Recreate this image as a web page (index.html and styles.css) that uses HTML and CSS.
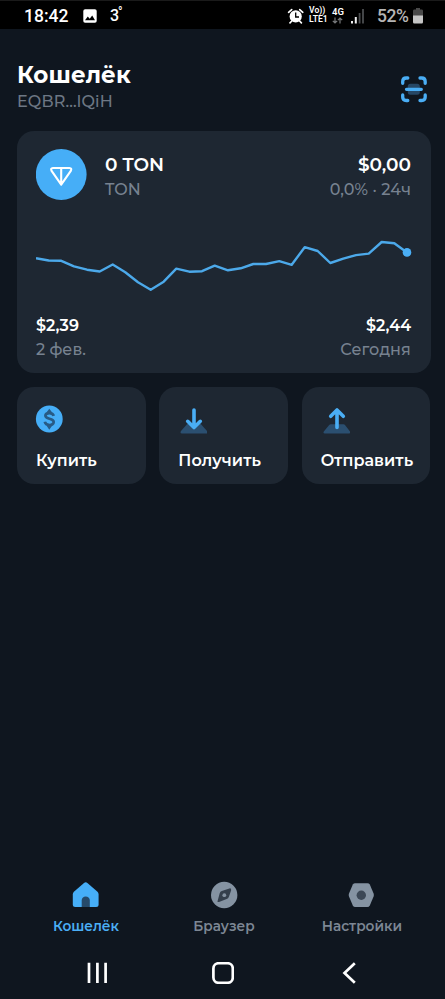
FILE: index.html
```html
<!DOCTYPE html>
<html lang="ru">
<head>
<meta charset="utf-8">
<title>Кошелёк</title>
<link rel="stylesheet" href="styles.css">
</head>
<body>
<div class="status">
  <span class="clock">18:42</span>
  <svg class="photo" width="14" height="14" viewBox="0 0 14 14"><rect x=".3" y=".3" width="13.4" height="13.4" rx="1.8" fill="#fff"/><path d="M2 11.2 4.8 7.6 6.7 9.8 9.2 6.5 12 11.2Z" fill="#000"/></svg>
  <span class="temp">3<i>°</i></span>
  <svg class="alarm" width="18" height="17" viewBox="287 7 18 17"><circle cx="295.7" cy="15.4" r="6.1" fill="#fff"/><path d="M288.6 11.3 291.7 8.6M302.8 11.3 299.7 8.6M291.8 20 290 21.8M299.6 20 301.4 21.8" stroke="#fff" stroke-width="1.7" stroke-linecap="round"/><path d="M295.7 11.6V16H299" fill="none" stroke="#000" stroke-width="1.3"/></svg>
  <span class="volte"><b>Vo))</b><b>LTE1</b></span>
  <span class="net"><b>4G</b><svg width="11" height="7" viewBox="0 0 11 7"><path d="M3 .4V6M.8 3.8 3 6 5.2 3.8M8 6.6V1M5.9 3.2 8 1 10.2 3.2" fill="none" stroke="#77797b" stroke-width="1.2"/></svg></span>
  <svg class="signal" width="14" height="15" viewBox="350 8 14 15"><path d="M352 20v2.5M355.8 16v6.5" stroke="#eee" stroke-width="2"/><path d="M359.6 12v10.5M363 8v14.5" stroke="#4b4d4f" stroke-width="1.8"/></svg>
  <span class="percent">52%</span>
  <svg class="battery" width="10" height="16" viewBox="0 0 10 16"><path d="M3 0H7V1.5H9Q10 1.5 10 3V8H0V3Q0 1.5 1 1.5H3Z" fill="#494949"/><path d="M0 7.5H10V14Q10 15.5 8.8 15.5H1.2Q0 15.5 0 14Z" fill="#c5c5c5"/></svg>
</div>

<header class="header">
  <div>
    <h1 class="title">Кошелёк</h1>
    <div class="address">EQBR...lQiH</div>
  </div>
  <svg class="scan" width="28" height="28" viewBox="400 75 28 28"><rect x="407.8" y="83.8" width="12" height="11" rx="2.5" fill="#264765"/><path d="M402.7 83.3V81.5Q402.7 78 406.2 78H407.8M420 78H421.7Q425.2 78 425.2 81.5V83.3M425.2 95V97Q425.2 100.5 421.7 100.5H420M407.8 100.5H406.2Q402.7 100.5 402.7 97V95M406.5 89.3H421.3" fill="none" stroke="#4aaef5" stroke-width="3.3" stroke-linecap="round"/></svg>
</header>

<main class="main">
  <section class="card">
    <div class="row top">
      <svg class="coin" width="52" height="52" viewBox="0 0 52 52"><circle cx="25.2" cy="25.5" r="25.4" fill="#46aef7"/><path d="M17 19H33.4Q36.2 19.2 34.8 21.9L25.2 35.6 15.6 21.9Q14.2 19.2 17 19ZM25.2 19V35" fill="none" stroke="#fff" stroke-width="2.1" stroke-linejoin="round"/></svg>
      <div class="asset"><div class="big ton">0 TON</div><div class="sub sym">TON</div></div>
      <div class="value"><div class="big usd">$0,00</div><div class="sub change">0,0% · 24ч</div></div>
    </div>
    <svg class="chart" width="378" height="64" viewBox="36 234 378 64"><polyline points="36,258.3 48.7,260.5 61.3,260.8 74,266.3 87,269.7 99.7,271.5 112.7,264.5 125.3,272.3 138,282.3 150.7,289.7 163.7,281.7 176.3,268.7 189.3,271.7 202,271.2 214.7,265.6 228,270.3 240.7,268.3 253.3,264 266,264 279.3,261.2 291.7,264.8 304.7,247.2 317.7,251 330.3,263 343.3,258.7 356,255.1 368.7,253.6 381.7,242 394.3,243.3 407,252.5" fill="none" stroke="#4ca9ea" stroke-width="2.4" stroke-linejoin="round"/><circle cx="407" cy="252.4" r="4.3" fill="#4aaef5"/></svg>
    <div class="row range">
      <div><div class="price from">$2,39</div><div class="sub date">2 фев.</div></div>
      <div class="right"><div class="price to">$2,44</div><div class="sub today">Сегодня</div></div>
    </div>
  </section>

  <div class="actions">
    <div class="action"><svg width="30" height="30" viewBox="35 404 30 30"><circle cx="49.3" cy="419" r="13.4" fill="#46aef7"/><path d="M53.7 415.9C52.8 411.9 45.4 412.3 45.4 415.8 45.4 419.6 53.7 418 53.7 422 53.7 426 45.6 426 44.8 421.8" fill="none" stroke="#285b85" stroke-width="2.7"/><path d="M46.4 412.4 49.3 408.8 52.2 412.4ZM46.4 425.5 49.3 429.7 52.2 425.5Z" fill="#285b85"/></svg><span class="buy">Купить</span></div>
    <div class="action"><svg width="30" height="30" viewBox="177 404 30 30"><path d="M187.2 424H200.8L207 431Q208.4 433.6 206 433.6H182Q179.6 433.6 181 431Z" fill="#2b4f70"/><path d="M194 410V427.3M187.7 421.3 194 427.5 200.3 421.3" fill="none" stroke="#4aaef5" stroke-width="3.6" stroke-linecap="round" stroke-linejoin="round"/></svg><span class="receive">Получить</span></div>
    <div class="action"><svg width="30" height="30" viewBox="320 404 30 30"><path d="M331 424.3H343.3Q344.5 424.3 345.2 425.2L350 431.4Q350.8 433.6 348.5 433.6H325Q322.7 433.6 323.8 431.4L329 425.2Q329.7 424.3 331 424.3Z" fill="#2b4f70"/><path d="M337 427.5V410M330.7 416.3 337 410 343.3 416.3" fill="none" stroke="#4aaef5" stroke-width="3.6" stroke-linecap="round" stroke-linejoin="round"/></svg><span class="send">Отправить</span></div>
  </div>
</main>

<nav class="tabs">
  <div class="tab active"><svg width="30" height="30" viewBox="71 880 30 30"><path d="M84 882.9Q85.7 881.5 87.4 882.9L97.5 891.8Q98.6 892.8 98.6 894.5V904.5Q98.6 907 96.1 907H75.3Q72.8 907 72.8 904.5V894.5Q72.8 892.8 73.9 891.8Z" fill="#46aef7"/><path d="M81.7 907V900Q82.2 896.4 85.7 896.4T89.8 900V907Z" fill="#264a6a"/></svg><span>Кошелёк</span></div>
  <div class="tab"><svg width="30" height="30" viewBox="209 880 30 30"><circle cx="224.2" cy="895" r="13.2" fill="#8593a2"/><path d="M217.6 900.9 219.7 893.3Q220.2 891.6 221.8 891L229.4 888.4Q231.6 888 231.1 890.4L228.9 896.8Q228.4 898.5 226.7 899.1L219 902Q217 902.4 217.6 900.9Z" fill="#343f4c"/><circle cx="224.3" cy="895.2" r="1.9" fill="#8593a2"/></svg><span>Браузер</span></div>
  <div class="tab"><svg width="30" height="30" viewBox="347 880 30 30"><path d="M355.2 883.2H367.4Q369 883.2 369.8 884.6L373.6 893.6Q374.2 895.1 373.6 896.6L369.8 905.5Q369 907 367.4 907H355.2Q353.6 907 352.8 905.5L349 896.6Q348.4 895.1 349 893.6L352.8 884.6Q353.6 883.2 355.2 883.2Z" fill="#8593a2"/><circle cx="361.3" cy="895.2" r="4.7" fill="#3c4856"/></svg><span>Настройки</span></div>
</nav>
<div class="system">
  <svg width="22" height="22" viewBox="0 0 22 22"><path d="M3 .8V21M11.4 .8V21M19.6 .8V21" stroke="#fff" stroke-width="2.7"/></svg>
  <svg width="22" height="22" viewBox="0 0 22 22"><rect x="1.4" y="1.2" width="19.4" height="19.6" rx="5.3" fill="none" stroke="#fff" stroke-width="2.7"/></svg>
  <svg width="22" height="22" viewBox="0 0 22 22"><path d="M16.8 1.2 6.5 11 16.8 20.8" fill="none" stroke="#fff" stroke-width="2.7"/></svg>
</div>
</body>
</html>
```

FILE: styles.css
```css
* { box-sizing: border-box; }
body {
  margin: 0;
  height: 999px;
  display: flex;
  flex-direction: column;
  background: #0f161f;
  color: #fff;
  font-family: Montserrat, Inter, sans-serif;
  overflow: hidden;
  white-space: nowrap;
}
svg { display: block; flex: none; }
.status {
  height: 29px;
  flex: none;
  display: flex;
  align-items: center;
  padding: 2px 0 0 24px;
  background: #000;
  border-top: 1px solid #1a1a1a;
  font: 17.5px/26px Roboto, sans-serif;
}
.clock { width: 59px; font-weight: 500; }
.temp { width: 24px; margin-left: 13px; font-size: 16px; font-weight: 500; display: flex; align-items: center; }
.temp i { font-size: 12px; font-style: normal; line-height: 12px; margin: -8px 0 0 -1px; }
.alarm { margin-left: 153px; }
.volte, .net { display: flex; flex-direction: column; }
.volte { width: 19px; margin-left: 4px; margin-top: -2px; }
.volte b { font-size: 8.6px; line-height: 9px; font-weight: 600; }
.net { width: 13px; margin-left: 4px; margin-top: -1px; font-size: 9.5px; line-height: 9.5px; }
.net b { font-weight: 600; }
.signal { margin-left: 5px; }
.percent { width: 32px; margin-left: 13px; font-size: 17.5px; font-weight: 500; letter-spacing: -0.4px; color: #b5b5b5; }
.battery { margin-left: 4px; }

.header {
  height: 101.5px;
  flex: none;
  display: flex;
  justify-content: space-between;
  padding: 31px 17px 0;
}
.title { margin: 0 0 2px; padding-top: 1px; font-size: 23px; line-height: 28px; font-weight: 700; letter-spacing: 0.1px; }
.address { font-size: 16px; line-height: 22px; font-weight: 500; letter-spacing: 0.15px; color: #6d7784; }
.scan { margin-top: 15px; }

.main { padding: 0 14.5px 0 17px; flex: 1; }
.card {
  height: 242.5px;
  padding: 18px 19.5px 0 19px;
  border-radius: 17px;
  background: #1e2732;
}
.row { display: flex; justify-content: space-between; }
.asset { margin: 3px auto 0 17px; }
.value { margin-top: 3px; }
.value, .right { text-align: right; }
.big { font-size: 18.5px; line-height: 26px; font-weight: 600; }
.sub { font-size: 16px; line-height: 24px; font-weight: 500; color: #778290; }
.change, .today { letter-spacing: 0.1px; }
.date, .today { line-height: 23px; }
.chart { margin-top: 32.5px; }
.range { margin-top: 16px; }
.price { font-size: 16px; line-height: 24px; font-weight: 600; }

.actions { display: grid; grid-template-columns: repeat(3, 1fr); gap: 13.5px; margin-top: 14px; }
.action {
  height: 97px;
  padding: 17px 0 0 19px;
  border-radius: 17px;
  background: #1e2732;
  font-size: 16px;
  line-height: 24px;
  font-weight: 600;
}
.action svg { margin: 0 0 15px -1px; }
.action span { display: block; letter-spacing: 0.08px; }

.tabs { height: 70px; flex: none; display: grid; grid-template-columns: repeat(3, 138px); padding-left: 17px; }
.tab { display: flex; flex-direction: column; align-items: center; color: #7d8794; font-size: 13.7px; line-height: 20px; font-weight: 600; }
.tab svg { margin-bottom: 6px; }
.active { color: #4aaef5; }
.system { height: 49px; flex: none; display: flex; padding: 12px 0 0 86px; gap: 104px; }
```
